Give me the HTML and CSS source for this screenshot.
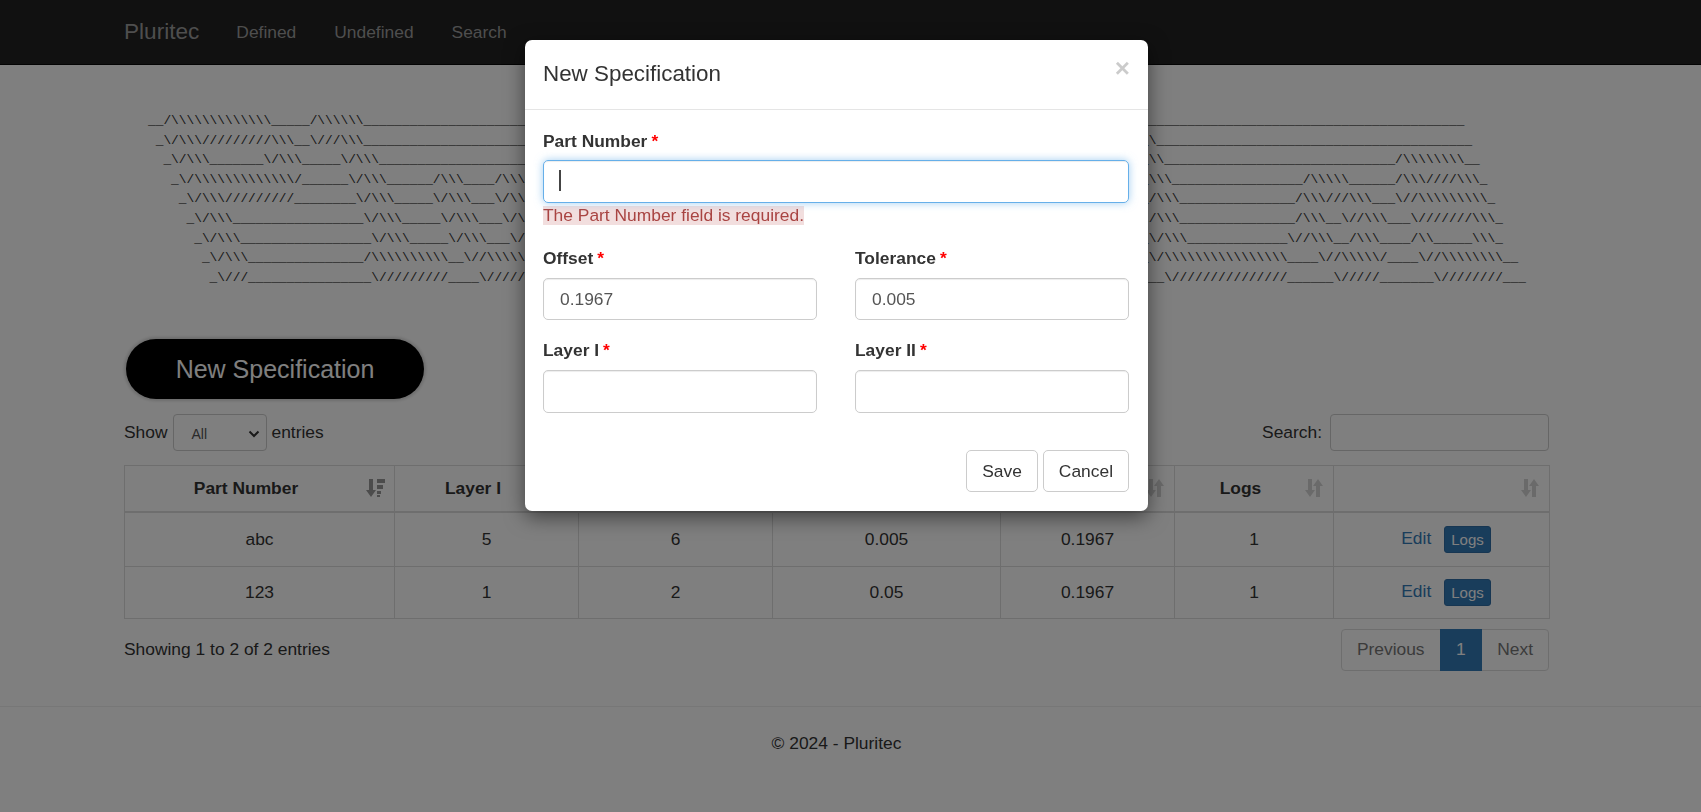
FILE: index.html
```html
<!DOCTYPE html>
<html>
    <head>
        <meta charset="utf-8">
        <title>Pluritec</title>
        <link rel="stylesheet" href="styles.css">
    </head>
    <body>
        <nav class="navbar">
            <div class="navbar-inner">
                <a class="brand">Pluritec</a>
                <a class="nav-link">Defined</a>
                <a class="nav-link">Undefined</a>
                <a class="nav-link">Search</a>
            </div>
        </nav>

        <div class="container">
<pre class="banner">__/\\\\\\\\\\\\\_____/\\\\\\_______________________________________________________________________________________________________________________________________________
 _\/\\\/////////\\\__\///\\\______________________________________________________________________________________________________\_________________________________________
  _\/\\\_______\/\\\_____\/\\\____________________________________________________________________________________________________\\______________________________/\\\\\\\\__
   _\/\\\\\\\\\\\\\/______\/\\\______/\\\____/\\\_________________________________________________________________________________\\\_________________/\\\\\______/\\\////\\\_
    _\/\\\/////////________\/\\\_____\/\\\___\/\\\________________________________________________________________________________/\\\_______________/\\\///\\\___\//\\\\\\\\\_
     _\/\\\_________________\/\\\_____\/\\\___\/\\_______________________________________________________________________________\/\\\_______________/\\\__\//\\\___\///////\\\_
      _\/\\\_________________\/\\\_____\/\\\___\/\\_______________________________________________________________________________\/\\\_____________\//\\\__/\\\____/\\_____\\\_
       _\/\\\_______________/\\\\\\\\\\__\//\\\\\\\_______________________________________________________________________________\/\\\\\\\\\\\\\\\\____\//\\\\\/____\//\\\\\\\\__
        _\///________________\/////////____\///////_________________________________________________________________________________\///////////////______\/////_______\////////___</pre>

            <button class="new-btn">New Specification</button>

            <div class="table-top">
                <div class="length">
                    Show
                    <span class="select-box">All
                        <svg width="12" height="8" viewBox="0 0 12 8"><path d="M1.500 1.500 6 6l4.500-4.500" fill="none" stroke="#333" stroke-width="2"/></svg>
                    </span>
                    entries
                </div>
                <div class="filter">
                    Search:
                    <span class="search-box"></span>
                </div>
            </div>

            <table class="spec-table">
                <colgroup>
                    <col class="c1"><col class="c2"><col class="c3"><col class="c4"><col class="c5"><col class="c6"><col class="c7">
                </colgroup>
                <thead>
                    <tr>
                        <th>Part Number<svg class="sort sort-on" viewBox="0 0 20 20"><path d="M4 1h4v11h3l-5 7-5-7h3z"/><path d="M12 1h8v4h-8zM12 7h6v4h-6zM12 13h4v3h-4zM12 17h3v2h-3z"/></svg></th>
                        <th>Layer I<svg class="sort" viewBox="0 0 20 20"><path d="M4 1h4v11h3l-5 7-5-7h3z"/><path d="M12 19V8H9l5-7 5 7h-3v11z"/></svg></th>
                        <th>Layer II<svg class="sort" viewBox="0 0 20 20"><path d="M4 1h4v11h3l-5 7-5-7h3z"/><path d="M12 19V8H9l5-7 5 7h-3v11z"/></svg></th>
                        <th>Tolerance<svg class="sort" viewBox="0 0 20 20"><path d="M4 1h4v11h3l-5 7-5-7h3z"/><path d="M12 19V8H9l5-7 5 7h-3v11z"/></svg></th>
                        <th>Offset<svg class="sort" viewBox="0 0 20 20"><path d="M4 1h4v11h3l-5 7-5-7h3z"/><path d="M12 19V8H9l5-7 5 7h-3v11z"/></svg></th>
                        <th>Logs<svg class="sort" viewBox="0 0 20 20"><path d="M4 1h4v11h3l-5 7-5-7h3z"/><path d="M12 19V8H9l5-7 5 7h-3v11z"/></svg></th>
                        <th><svg class="sort" viewBox="0 0 20 20"><path d="M4 1h4v11h3l-5 7-5-7h3z"/><path d="M12 19V8H9l5-7 5 7h-3v11z"/></svg></th>
                    </tr>
                </thead>
                <tbody>
                    <tr class="row-a">
                        <td>abc</td><td>5</td><td>6</td><td>0.005</td><td>0.1967</td><td>1</td>
                        <td class="actions"><a class="edit">Edit</a><a class="logs-btn">Logs</a></td>
                    </tr>
                    <tr class="row-b">
                        <td>123</td><td>1</td><td>2</td><td>0.05</td><td>0.1967</td><td>1</td>
                        <td class="actions"><a class="edit">Edit</a><a class="logs-btn">Logs</a></td>
                    </tr>
                </tbody>
            </table>

            <div class="table-bottom">
                <div class="info">Showing 1 to 2 of 2 entries</div>
                <div class="pagination">
                    <a class="page">Previous</a><a class="page active">1</a><a class="page">Next</a>
                </div>
            </div>
        </div>

        <footer class="footer">
            <p>&copy; 2024 - Pluritec</p>
        </footer>

        <div class="backdrop"></div>

        <div class="modal">
            <div class="modal-header">
                <h4>New Specification</h4>
                <span class="close">&times;</span>
            </div>
            <div class="modal-body">
                <div class="field">
                    <label>Part Number<span class="req">*</span></label>
                    <div class="input focused"><span class="caret"></span></div>
                    <span class="error">The Part Number field is required.</span>
                </div>
                <div class="form-row row-one">
                    <div class="field">
                        <label>Offset<span class="req">*</span></label>
                        <div class="input">0.1967</div>
                    </div>
                    <div class="field">
                        <label>Tolerance<span class="req">*</span></label>
                        <div class="input">0.005</div>
                    </div>
                </div>
                <div class="form-row row-two">
                    <div class="field">
                        <label>Layer I<span class="req">*</span></label>
                        <div class="input"></div>
                    </div>
                    <div class="field">
                        <label>Layer II<span class="req">*</span></label>
                        <div class="input"></div>
                    </div>
                </div>
                <div class="modal-actions">
                    <button class="btn">Save</button>
                    <button class="btn">Cancel</button>
                </div>
            </div>
        </div>
    </body>
</html>
```

FILE: styles.css
```css
html, body {
    margin: 0;
    height: 812px;
    overflow: hidden;
}
body {
    font-family: "Liberation Sans", Arial, sans-serif;
    font-size: 17.4px;
    color: #333;
    background-color: #fff;
}
.navbar {
    height: 64px;
    background-color: #222;
    border-bottom: 1px solid #080808;
}
.navbar-inner {
    display: flex;
    align-items: center;
    height: 64px;
    padding-left: 124px;
}
.brand {
    font-size: 22.6px;
    color: #9d9d9d;
    margin-right: 37px;
}
.nav-link {
    color: #9d9d9d;
    margin-right: 38px;
}
.container {
    padding: 0 152px 0 124px;
}
.banner {
    margin: 46px 0 0 24px;
    font-family: "Liberation Mono", monospace;
    font-size: 12.83px;
    line-height: 19.6px;
    color: #333;
}
.new-btn {
    display: block;
    width: 298px;
    height: 60px;
    margin: 52px 0 0 2px;
    padding: 0;
    font-family: inherit;
    font-size: 25px;
    color: #fff;
    background-color: #000;
    border: none;
    border-radius: 30px;
    box-shadow: 0 0 3px 2px rgba(0, 0, 0, 0.15);
}
.table-top {
    display: flex;
    justify-content: space-between;
    align-items: center;
    height: 37px;
    margin-top: 15px;
}
.length, .filter {
    display: flex;
    align-items: center;
    gap: 5px;
}
.filter {
    gap: 8px;
}
.select-box {
    display: flex;
    align-items: center;
    justify-content: space-between;
    box-sizing: border-box;
    width: 94px;
    height: 37px;
    padding: 2px 6px 0 18px;
    font-size: 14px;
    color: #555;
    border: 1px solid #ccc;
    border-radius: 4px;
}
.search-box {
    display: block;
    box-sizing: border-box;
    width: 219px;
    height: 37px;
    border: 1px solid #ccc;
    border-radius: 4px;
}
.spec-table {
    width: 1425px;
    margin-top: 14px;
    border-collapse: collapse;
    table-layout: fixed;
}
.c1 { width: 270px; }
.c2 { width: 184px; }
.c3 { width: 194px; }
.c4 { width: 228px; }
.c5 { width: 174px; }
.c6 { width: 159px; }
.c7 { width: 216px; }
.spec-table th, .spec-table td {
    border: 1px solid #ddd;
    text-align: center;
    padding: 0;
}
.spec-table th {
    position: relative;
    height: 46px;
    padding-right: 27px;
    border-bottom-width: 2px;
    box-sizing: border-box;
    color: #333;
}
.spec-table td.actions {
    padding-left: 9px;
}
.row-a td { height: 53px; }
.row-b td { height: 51px; }
.sort {
    position: absolute;
    right: 9px;
    top: 12px;
    width: 20px;
    height: 20px;
    fill: #333;
    opacity: 0.2;
}
.sort-on { opacity: 0.5; }
.edit {
    color: #337ab7;
}
.logs-btn {
    display: inline-block;
    margin-left: 13px;
    padding: 4px 6px;
    font-size: 15px;
    line-height: 17px;
    color: #fff;
    background-color: #337ab7;
    border: 1px solid #2e6da4;
    border-radius: 3px;
    vertical-align: middle;
}
.table-bottom {
    display: flex;
    justify-content: space-between;
    align-items: center;
    margin-top: 10px;
}
.pagination {
    display: flex;
    height: 42px;
    border: 1px solid #ddd;
    border-radius: 4px;
    box-sizing: border-box;
}
.page {
    display: flex;
    align-items: center;
    padding: 0 15px;
    color: #777;
}
.page.active {
    color: #fff;
    background-color: #337ab7;
    margin: -1px 0;
    padding: 0 16.500px;
}
.footer {
    margin-top: 35px;
    padding-right: 28px;
    border-top: 1px solid #eee;
    text-align: center;
    color: #333;
}
.footer p {
    margin: 26px 0 0;
}
.backdrop {
    position: fixed;
    top: 0;
    left: 0;
    right: 0;
    bottom: 0;
    background-color: #000;
    opacity: 0.5;
}
.modal {
    position: absolute;
    top: 40px;
    left: 525px;
    width: 623px;
    height: 471px;
    background-color: #fff;
    border-radius: 7px;
    box-shadow: 0 6px 20px rgba(0, 0, 0, 0.5);
}
.modal-header {
    position: relative;
    height: 69px;
    border-bottom: 1px solid #e5e5e5;
    padding-left: 18px;
}
.modal-header h4 {
    margin: 0;
    font-size: 22.4px;
    font-weight: 500;
    line-height: 67px;
}
.close {
    position: absolute;
    right: 18px;
    top: 13px;
    font-size: 26px;
    font-weight: bold;
    color: #000;
    opacity: 0.2;
}
.modal-body {
    padding: 19px 19px 0 18px;
}
label {
    display: block;
    font-weight: bold;
    line-height: 24px;
    height: 31px;
}
.form-row label {
    line-height: 22px;
}
.req {
    color: red;
    margin-left: 4px;
}
.input {
    position: relative;
    box-sizing: border-box;
    height: 42px;
    line-height: 40px;
    padding-left: 16px;
    color: #555;
    border: 1px solid #ccc;
    border-radius: 5px;
    box-shadow: inset 0 1px 1px rgba(0, 0, 0, 0.075);
}
.input.focused {
    height: 43px;
    border-color: #66afe9;
    box-shadow: inset 0 1px 1px rgba(0, 0, 0, 0.075), 0 0 8px rgba(102, 175, 233, 0.6);
}
.caret {
    position: absolute;
    left: 15px;
    top: 9px;
    width: 2px;
    height: 21px;
    background-color: #444;
}
.error {
    display: inline-block;
    line-height: 19px;
    margin-top: 3px;
    color: #a94442;
    background-color: #f2dede;
}
.form-row {
    display: grid;
    grid-template-columns: 1fr 1fr;
    column-gap: 38px;
}
.row-one { margin-top: 21px; }
.row-two { margin-top: 19px; }
.row-two .input { height: 43px; }
.modal-actions {
    display: flex;
    justify-content: flex-end;
    gap: 5px;
    margin-top: 37px;
}
.btn {
    height: 42px;
    padding: 0 15px;
    font-family: inherit;
    font-size: 17.4px;
    color: #333;
    background-color: #fff;
    border: 1px solid #ccc;
    border-radius: 5px;
}
```
